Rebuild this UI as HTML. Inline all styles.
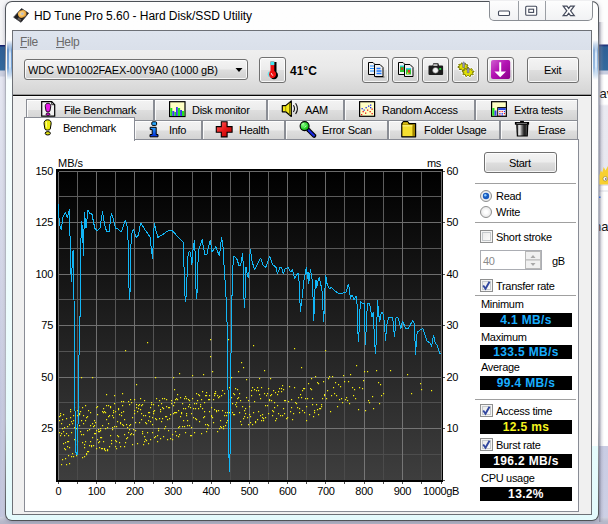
<!DOCTYPE html>
<html><head><meta charset="utf-8"><title>HD Tune Pro 5.60 - Hard Disk/SSD Utility</title>
<style>
html,body{margin:0;padding:0}
body{width:608px;height:524px;overflow:hidden;position:relative;background:#fff;font-family:"Liberation Sans",sans-serif;font-size:11px;color:#000}
div,span{position:absolute;box-sizing:border-box;white-space:nowrap}
.t{line-height:12px;height:12px;letter-spacing:-.3px}
/* desktop behind */
#bgL{left:0;top:0;width:8px;height:524px;background:linear-gradient(#f6f6f8 0,#f4f4f6 45px,#14206e 45px,#14206e 46px,#2d5f96 47px,#336a9e 70px,#cdd2e2 71px,#cdd2e2 76px,#e6e8f3 77px,#e2e4f0 300px,#d6d9e9 524px)}
#bgLs{left:0;top:77px;width:6px;height:447px;background:linear-gradient(to right,rgba(190,194,220,.9),rgba(215,218,235,.2))}
#bgLs2{left:0;top:77px;width:6px;height:447px;background:linear-gradient(rgba(232,234,244,.95),rgba(232,234,244,.6) 120px,rgba(232,234,244,0) 330px)}
#bgR{left:596px;top:0;width:12px;height:524px;background:linear-gradient(#fdfdfd 0,#fdfdfd 44px,#1c2a74 45px,#2d5f96 47px,#336a9e 70px,#c8cde0 71px,#c8cde0 74px,#ffffff 75px,#ffffff 104px,#e9e9f1 106px,#e7e7ef 186px,#fff 186px,#fff 190px,#dcdce4 191px,#fff 192px,#ffffff 446px,#c9cce3 446px,#cdd0e5 524px)}
#bgRs{left:599px;top:22px;width:5px;height:500px;background:linear-gradient(to right,rgba(110,110,130,.55),rgba(150,150,170,.2) 50%,rgba(160,160,180,0))}
#bgB{left:0;top:517px;width:608px;height:7px;background:linear-gradient(#d0d3e2,#b8bacb 60%,#b4b6c8)}
/* window */
#win{left:5px;top:1px;width:594px;height:520px;border:1px solid transparent;border-radius:7px;background:linear-gradient(#fefefe 0,#fdfdfd 444px,#e5fbfc 444px,#e4fafc 100%) padding-box,linear-gradient(#4c5056 0,#5c6066 30px,#a8acb6 70px,#b4b8c2 110px,#b0b4be 420px,#6a6e74 490px,#4e5256 520px) border-box;box-shadow:0 1px 4px 0 rgba(70,70,100,.35)}
#frL{left:6px;top:78px;width:6px;height:380px;background:linear-gradient(#f8fefe,#eefcfd 200px,#e5fbfc 380px)}
#frR{left:592px;top:446px;width:6px;height:72px;background:#e5fbfc}
#frB{left:7px;top:515px;width:590px;height:5px;border-radius:0 0 5px 5px;background:linear-gradient(#e6fcfd,#e3fafc)}
#glowL{left:7px;top:40px;width:5px;height:40px;background:linear-gradient(rgba(70,125,190,0),rgba(70,125,190,.8) 25%,rgba(90,145,205,.8) 70%,rgba(120,170,220,0))}
#glowR{left:593px;top:40px;width:5px;height:40px;background:linear-gradient(rgba(70,125,190,0),rgba(90,140,200,.7) 25%,rgba(110,160,215,.7) 70%,rgba(120,170,220,0))}
.glc{width:1.5px;top:44px;height:32px;background:linear-gradient(rgba(255,255,255,0),rgba(235,245,255,.8) 30%,rgba(235,245,255,.8) 70%,rgba(255,255,255,0))}
.bt{font-size:13px;line-height:14px;height:14px;color:#111}
#title{left:34px;top:9px;letter-spacing:-.05px;font-size:12px;line-height:15px;height:15px;color:#000;transform-origin:0 0}
#caps{left:489px;top:1px;width:104px;height:20px;border:1px solid #8a8e94;border-top:none;border-radius:0 0 5px 5px;background:linear-gradient(#fdfdfd,#f1f2f4)}
#caps i{position:absolute;top:0;width:1px;height:19px;background:#9a9ea4}
/* client */
#client{left:12px;top:30px;width:580px;height:485px;border:1px solid #6d7076;background:#f0f0f0}
#menubar{left:13px;top:31px;width:578px;height:19px;background:linear-gradient(#dee4ee,#dae0ea)}
.mi{top:35px;letter-spacing:-.35px;font-size:12px;line-height:14px;height:14px;color:#6a6a6a}
.mi u{text-decoration:underline}
#toolbar{left:13px;top:50px;width:578px;height:45px;background:linear-gradient(#efefef,#e9e9e9 40%,#d4d4d4)}
#tbline{left:13px;top:94px;width:578px;height:3px;background:linear-gradient(#9a9a9a 0,#9a9a9a 33%,#060606 33%,#060606 67%,#f8f8f8 67%)}
.btn{border:1px solid #707070;border-radius:3px;background:linear-gradient(#f4f4f4 0,#ececec 48%,#dedede 52%,#d0d0d0 100%);box-shadow:inset 0 0 0 1px rgba(255,255,255,.8)}
#combo{left:24px;top:59px;width:224px;height:21px}
/* tabs */
.tab{border:1px solid #8a8d94;border-bottom:none;background:linear-gradient(#f3f3f3 0,#ececec 48%,#dedede 52%,#d2d2d2 100%);height:20px;box-shadow:inset 1px 1px 0 rgba(255,255,255,.85)}
.tab.r1{top:99px;height:21px}
.tab.r2{top:120px;height:20px}
#seltab{left:24px;top:117px;width:111px;height:24px;border:1px solid #898c95;border-bottom:none;background:#fff}
#page{left:24px;top:139px;width:555px;height:373px;border:1px solid #898c95;background:#fff}
.sep{left:475px;width:101px;height:1px;background:#a0a0a0}
.vb{left:480px;width:92px;height:14px;background:#000;text-align:center;font-weight:bold;font-size:12px;line-height:14px;color:#18aeff;letter-spacing:.35px}
.cb{left:480px;width:13px;height:13px;border:1px solid #8e8f8f;background:linear-gradient(135deg,#e6e6e6,#fff);box-shadow:inset 0 0 0 1px #f4f4f4, inset 0 0 0 2px #c5c9cc}
.rb{left:480px;width:12px;height:12px;border:1px solid #8e8f8f;border-radius:6px;background:radial-gradient(#fff 20%,#dcdcdc 100%)}
svg{position:absolute;left:0;top:0}
.ax{font-family:"Liberation Sans",sans-serif;font-size:11px;fill:#000;letter-spacing:-.3px}
</style></head><body>
<div id="bgL"></div><div id="bgLs"></div><div id="bgLs2"></div><div id="bgR"></div><div id="bgB"></div>
<span class="bt" style="left:599.500px;top:87px">av</span><span class="bt" style="left:594px;top:220px">ha</span>
<div id="bgRs"></div>
<div id="win"></div><div id="frL"></div><div id="glowL"></div><div id="glowR"></div><div class="glc" style="left:9px"></div><div class="glc" style="left:595px"></div>
<div id="title">HD Tune Pro 5.60 - Hard Disk/SSD Utility</div>
<div id="caps"><i style="left:28px"></i><i style="left:55px"></i></div>
<div id="client"></div>
<div id="menubar"></div>
<span class="mi" style="left:20px"><u>F</u>ile</span><span class="mi" style="left:56px"><u>H</u>elp</span>
<div id="toolbar"></div><div id="tbline"></div>
<div id="combo" class="btn"></div>
<span class="t" style="left:28px;top:64px;letter-spacing:-.15px" id="cbtxt">WDC WD1002FAEX-00Y9A0 (1000 gB)</span>
<div class="btn" style="left:259px;top:57px;width:27px;height:26px"></div>
<span id="temp" style="left:290px;top:64px;font-size:12px;font-weight:bold;line-height:14px;height:14px">41°C</span>
<div class="btn" style="left:362px;top:57px;width:27px;height:26px"></div>
<div class="btn" style="left:392px;top:57px;width:27px;height:26px"></div>
<div class="btn" style="left:422px;top:57px;width:27px;height:26px"></div>
<div class="btn" style="left:452px;top:57px;width:27px;height:26px"></div>
<div class="btn" style="left:487px;top:57px;width:27px;height:26px"></div>
<div class="btn" style="left:527px;top:57px;width:52px;height:26px"></div>
<span class="t" style="left:544px;top:64px">Exit</span>

<!-- tabs row 1 -->
<div class="tab r1" style="left:26px;width:128px"></div>
<div class="tab r1" style="left:154px;width:113px"></div>
<div class="tab r1" style="left:267px;width:77px"></div>
<div class="tab r1" style="left:344px;width:131px"></div>
<div class="tab r1" style="left:475px;width:103px"></div>
<span class="t" style="left:64px;top:104px">File Benchmark</span>
<span class="t" style="left:192px;top:104px">Disk monitor</span>
<span class="t" style="left:305px;top:104px">AAM</span>
<span class="t" style="left:382px;top:104px">Random Access</span>
<span class="t" style="left:514px;top:104px">Extra tests</span>
<!-- tabs row 2 -->
<div class="tab r2" style="left:134px;width:68px"></div>
<div class="tab r2" style="left:202px;width:83px"></div>
<div class="tab r2" style="left:285px;width:103px"></div>
<div class="tab r2" style="left:388px;width:112px"></div>
<div class="tab r2" style="left:500px;width:78px"></div>
<div id="page"></div>
<div id="seltab"></div>
<span class="t" style="left:63px;top:122px">Benchmark</span>
<span class="t" style="left:169px;top:124px">Info</span>
<span class="t" style="left:239px;top:124px">Health</span>
<span class="t" style="left:322px;top:124px">Error Scan</span>
<span class="t" style="left:424px;top:124px">Folder Usage</span>
<span class="t" style="left:538px;top:124px">Erase</span>

<!-- right panel -->
<div class="btn" style="left:484px;top:152px;width:73px;height:21px"></div>
<span class="t" style="left:509px;top:157px">Start</span>
<div class="sep" style="top:183px"></div>
<div class="rb" style="top:190px"></div><span class="t" style="left:496px;top:190px">Read</span>
<div class="rb" style="top:206px"></div><span class="t" style="left:496px;top:206px">Write</span>
<div class="sep" style="top:222px"></div>
<div class="cb" style="top:230px"></div><span class="t" style="left:496px;top:231px">Short stroke</span>
<div style="left:480px;top:250px;width:62px;height:20px;border:1px solid #abadb3;background:#fff"></div>
<span class="t" style="left:483px;top:255px;color:#8a8a8a">40</span>
<span class="t" style="left:552px;top:255px">gB</span>
<div class="cb" style="top:279px"></div><span class="t" style="left:496px;top:280px">Transfer rate</span>
<div class="sep" style="top:295px"></div>
<span class="t" style="left:481px;top:298px">Minimum</span>
<div class="vb" style="top:313px">4.1 MB/s</div>
<span class="t" style="left:481px;top:331px">Maximum</span>
<div class="vb" style="top:345px">133.5 MB/s</div>
<span class="t" style="left:481px;top:361px">Average</span>
<div class="vb" style="top:376px">99.4 MB/s</div>
<div class="sep" style="top:399px"></div>
<div class="cb" style="top:404px"></div><span class="t" style="left:496px;top:405px">Access time</span>
<div class="vb" style="top:420px;color:#f4f41e">12.5 ms</div>
<div class="cb" style="top:438px"></div><span class="t" style="left:496px;top:439px">Burst rate</span>
<div class="vb" style="top:454px;color:#fff">196.2 MB/s</div>
<span class="t" style="left:481px;top:472px">CPU usage</span>
<div class="vb" style="top:487px;color:#fff">13.2%</div>

<!-- chart -->
<svg width="608" height="524" viewBox="0 0 608 524" id="chart">
<defs><linearGradient id="cg" x1="0" y1="0" x2="0" y2="1"><stop offset="0" stop-color="#000"/><stop offset="1" stop-color="#3e3e3e"/></linearGradient><linearGradient id="mg" gradientUnits="userSpaceOnUse" x1="0" y1="171" x2="0" y2="480"><stop offset="0" stop-color="#5e5e5e"/><stop offset="1" stop-color="#4a4a4a"/></linearGradient><linearGradient id="Mg" gradientUnits="userSpaceOnUse" x1="0" y1="171" x2="0" y2="480"><stop offset="0" stop-color="#6a6a6a"/><stop offset="1" stop-color="#767676"/></linearGradient></defs>
<rect x="56" y="169" width="387" height="313" fill="#000"/>
<rect x="58" y="171" width="384" height="309" fill="url(#cg)"/>
<g stroke-width="1" fill="none" id="grid" shape-rendering="crispEdges"><path stroke="url(#mg)" d="M77.5 171.5V480.5M115.5 171.5V480.5M153.5 171.5V480.5M192.5 171.5V480.5M230.5 171.5V480.5M268.5 171.5V480.5M306.5 171.5V480.5M344.5 171.5V480.5M383.5 171.5V480.5M421.5 171.5V480.5"/><path stroke="#5c5c5c" d="M58.5 196.5H441.5"/><path stroke="#595959" d="M58.5 248.5H441.5"/><path stroke="#565656" d="M58.5 299.5H441.5"/><path stroke="#535353" d="M58.5 351.5H441.5"/><path stroke="#505050" d="M58.5 402.5H441.5"/><path stroke="#4d4d4d" d="M58.5 454.5H441.5"/><path stroke="url(#Mg)" d="M58.5 171.5V480.5M96.5 171.5V480.5M134.5 171.5V480.5M172.5 171.5V480.5M211.5 171.5V480.5M249.5 171.5V480.5M287.5 171.5V480.5M325.5 171.5V480.5M364.5 171.5V480.5M402.5 171.5V480.5M441.5 171.5V480.5M58.5 171.5H441.5M58.5 222.5H441.5M58.5 274.5H441.5M58.5 325.5H441.5M58.5 377.5H441.5M58.5 428.5H441.5M58.5 480.5H441.5"/></g>
<path d="M59 420h1.15v1.15h-1.15zM59 416h1.15v1.15h-1.15zM59 432h1.15v1.15h-1.15zM60 413h1.15v1.15h-1.15zM60 415h1.15v1.15h-1.15zM60 435h1.15v1.15h-1.15zM61 423h1.15v1.15h-1.15zM61 464h1.15v1.15h-1.15zM61 433h1.15v1.15h-1.15zM62 459h1.15v1.15h-1.15zM62 419h1.15v1.15h-1.15zM62 428h1.15v1.15h-1.15zM63 443h1.15v1.15h-1.15zM63 431h1.15v1.15h-1.15zM63 414h1.15v1.15h-1.15zM64 448h1.15v1.15h-1.15zM64 427h1.15v1.15h-1.15zM64 435h1.15v1.15h-1.15zM65 449h1.15v1.15h-1.15zM65 442h1.15v1.15h-1.15zM65 458h1.15v1.15h-1.15zM66 464h1.15v1.15h-1.15zM66 433h1.15v1.15h-1.15zM66 418h1.15v1.15h-1.15zM67 446h1.15v1.15h-1.15zM67 441h1.15v1.15h-1.15zM67 426h1.15v1.15h-1.15zM68 441h1.15v1.15h-1.15zM68 455h1.15v1.15h-1.15zM68 435h1.15v1.15h-1.15zM69 447h1.15v1.15h-1.15zM69 463h1.15v1.15h-1.15zM69 424h1.15v1.15h-1.15zM70 409h1.15v1.15h-1.15zM70 417h1.15v1.15h-1.15zM70 411h1.15v1.15h-1.15zM71 421h1.15v1.15h-1.15zM71 456h1.15v1.15h-1.15zM71 432h1.15v1.15h-1.15zM72 453h1.15v1.15h-1.15zM72 423h1.15v1.15h-1.15zM73 456h1.15v1.15h-1.15zM73 415h1.15v1.15h-1.15zM73 420h1.15v1.15h-1.15zM74 439h1.15v1.15h-1.15zM74 407h1.15v1.15h-1.15zM74 427h1.15v1.15h-1.15zM75 444h1.15v1.15h-1.15zM75 440h1.15v1.15h-1.15zM76 455h1.15v1.15h-1.15zM76 454h1.15v1.15h-1.15zM76 428h1.15v1.15h-1.15zM77 441h1.15v1.15h-1.15zM77 410h1.15v1.15h-1.15zM77 415h1.15v1.15h-1.15zM78 406h1.15v1.15h-1.15zM78 411h1.15v1.15h-1.15zM78 407h1.15v1.15h-1.15zM79 414h1.15v1.15h-1.15zM79 425h1.15v1.15h-1.15zM79 413h1.15v1.15h-1.15zM80 431h1.15v1.15h-1.15zM80 411h1.15v1.15h-1.15zM81 420h1.15v1.15h-1.15zM81 377h1.15v1.15h-1.15zM81 434h1.15v1.15h-1.15zM82 407h1.15v1.15h-1.15zM82 457h1.15v1.15h-1.15zM82 442h1.15v1.15h-1.15zM83 415h1.15v1.15h-1.15zM83 434h1.15v1.15h-1.15zM83 423h1.15v1.15h-1.15zM84 456h1.15v1.15h-1.15zM84 447h1.15v1.15h-1.15zM84 444h1.15v1.15h-1.15zM85 405h1.15v1.15h-1.15zM85 420h1.15v1.15h-1.15zM85 441h1.15v1.15h-1.15zM86 453h1.15v1.15h-1.15zM86 454h1.15v1.15h-1.15zM86 417h1.15v1.15h-1.15zM87 416h1.15v1.15h-1.15zM87 451h1.15v1.15h-1.15zM87 430h1.15v1.15h-1.15zM88 410h1.15v1.15h-1.15zM88 451h1.15v1.15h-1.15zM89 429h1.15v1.15h-1.15zM89 445h1.15v1.15h-1.15zM89 445h1.15v1.15h-1.15zM90 425h1.15v1.15h-1.15zM90 441h1.15v1.15h-1.15zM90 412h1.15v1.15h-1.15zM91 445h1.15v1.15h-1.15zM91 446h1.15v1.15h-1.15zM92 423h1.15v1.15h-1.15zM92 377h1.15v1.15h-1.15zM92 437h1.15v1.15h-1.15zM93 426h1.15v1.15h-1.15zM93 445h1.15v1.15h-1.15zM94 420h1.15v1.15h-1.15zM94 433h1.15v1.15h-1.15zM94 425h1.15v1.15h-1.15zM95 422h1.15v1.15h-1.15zM95 433h1.15v1.15h-1.15zM96 448h1.15v1.15h-1.15zM96 430h1.15v1.15h-1.15zM96 407h1.15v1.15h-1.15zM97 406h1.15v1.15h-1.15zM97 414h1.15v1.15h-1.15zM97 439h1.15v1.15h-1.15zM98 429h1.15v1.15h-1.15zM98 442h1.15v1.15h-1.15zM98 431h1.15v1.15h-1.15zM99 441h1.15v1.15h-1.15zM99 431h1.15v1.15h-1.15zM99 447h1.15v1.15h-1.15zM100 428h1.15v1.15h-1.15zM100 437h1.15v1.15h-1.15zM100 430h1.15v1.15h-1.15zM101 437h1.15v1.15h-1.15zM101 448h1.15v1.15h-1.15zM102 448h1.15v1.15h-1.15zM102 411h1.15v1.15h-1.15zM102 425h1.15v1.15h-1.15zM103 408h1.15v1.15h-1.15zM103 441h1.15v1.15h-1.15zM103 412h1.15v1.15h-1.15zM104 411h1.15v1.15h-1.15zM104 449h1.15v1.15h-1.15zM104 448h1.15v1.15h-1.15zM105 450h1.15v1.15h-1.15zM105 412h1.15v1.15h-1.15zM105 428h1.15v1.15h-1.15zM106 419h1.15v1.15h-1.15zM106 405h1.15v1.15h-1.15zM106 394h1.15v1.15h-1.15zM107 427h1.15v1.15h-1.15zM107 450h1.15v1.15h-1.15zM107 449h1.15v1.15h-1.15zM108 405h1.15v1.15h-1.15zM108 416h1.15v1.15h-1.15zM108 423h1.15v1.15h-1.15zM109 415h1.15v1.15h-1.15zM109 446h1.15v1.15h-1.15zM110 407h1.15v1.15h-1.15zM110 435h1.15v1.15h-1.15zM110 406h1.15v1.15h-1.15zM111 440h1.15v1.15h-1.15zM111 443h1.15v1.15h-1.15zM111 443h1.15v1.15h-1.15zM112 429h1.15v1.15h-1.15zM112 415h1.15v1.15h-1.15zM112 427h1.15v1.15h-1.15zM113 410h1.15v1.15h-1.15zM113 412h1.15v1.15h-1.15zM113 417h1.15v1.15h-1.15zM114 426h1.15v1.15h-1.15zM114 395h1.15v1.15h-1.15zM114 403h1.15v1.15h-1.15zM115 411h1.15v1.15h-1.15zM115 446h1.15v1.15h-1.15zM115 440h1.15v1.15h-1.15zM116 441h1.15v1.15h-1.15zM116 426h1.15v1.15h-1.15zM116 448h1.15v1.15h-1.15zM117 435h1.15v1.15h-1.15zM117 421h1.15v1.15h-1.15zM118 408h1.15v1.15h-1.15zM118 436h1.15v1.15h-1.15zM118 409h1.15v1.15h-1.15zM119 442h1.15v1.15h-1.15zM119 414h1.15v1.15h-1.15zM120 423h1.15v1.15h-1.15zM120 422h1.15v1.15h-1.15zM120 446h1.15v1.15h-1.15zM121 412h1.15v1.15h-1.15zM121 415h1.15v1.15h-1.15zM121 401h1.15v1.15h-1.15zM122 424h1.15v1.15h-1.15zM122 393h1.15v1.15h-1.15zM122 405h1.15v1.15h-1.15zM123 401h1.15v1.15h-1.15zM123 411h1.15v1.15h-1.15zM123 425h1.15v1.15h-1.15zM124 434h1.15v1.15h-1.15zM124 419h1.15v1.15h-1.15zM124 446h1.15v1.15h-1.15zM125 350h1.15v1.15h-1.15zM125 442h1.15v1.15h-1.15zM126 438h1.15v1.15h-1.15zM126 424h1.15v1.15h-1.15zM127 437h1.15v1.15h-1.15zM127 427h1.15v1.15h-1.15zM128 432h1.15v1.15h-1.15zM128 401h1.15v1.15h-1.15zM129 404h1.15v1.15h-1.15zM129 425h1.15v1.15h-1.15zM129 429h1.15v1.15h-1.15zM130 399h1.15v1.15h-1.15zM130 434h1.15v1.15h-1.15zM130 424h1.15v1.15h-1.15zM131 433h1.15v1.15h-1.15zM131 402h1.15v1.15h-1.15zM131 433h1.15v1.15h-1.15zM132 444h1.15v1.15h-1.15zM132 417h1.15v1.15h-1.15zM133 434h1.15v1.15h-1.15zM133 429h1.15v1.15h-1.15zM134 410h1.15v1.15h-1.15zM134 413h1.15v1.15h-1.15zM134 399h1.15v1.15h-1.15zM135 430h1.15v1.15h-1.15zM135 430h1.15v1.15h-1.15zM135 422h1.15v1.15h-1.15zM136 404h1.15v1.15h-1.15zM136 407h1.15v1.15h-1.15zM136 384h1.15v1.15h-1.15zM137 443h1.15v1.15h-1.15zM137 411h1.15v1.15h-1.15zM138 408h1.15v1.15h-1.15zM138 405h1.15v1.15h-1.15zM139 404h1.15v1.15h-1.15zM139 422h1.15v1.15h-1.15zM140 409h1.15v1.15h-1.15zM140 398h1.15v1.15h-1.15zM141 419h1.15v1.15h-1.15zM141 405h1.15v1.15h-1.15zM141 413h1.15v1.15h-1.15zM142 433h1.15v1.15h-1.15zM142 404h1.15v1.15h-1.15zM142 431h1.15v1.15h-1.15zM143 415h1.15v1.15h-1.15zM143 444h1.15v1.15h-1.15zM143 415h1.15v1.15h-1.15zM144 400h1.15v1.15h-1.15zM144 436h1.15v1.15h-1.15zM144 441h1.15v1.15h-1.15zM145 422h1.15v1.15h-1.15zM145 415h1.15v1.15h-1.15zM145 439h1.15v1.15h-1.15zM146 440h1.15v1.15h-1.15zM146 423h1.15v1.15h-1.15zM147 432h1.15v1.15h-1.15zM147 432h1.15v1.15h-1.15zM147 342h1.15v1.15h-1.15zM148 420h1.15v1.15h-1.15zM148 412h1.15v1.15h-1.15zM148 443h1.15v1.15h-1.15zM149 412h1.15v1.15h-1.15zM149 416h1.15v1.15h-1.15zM150 407h1.15v1.15h-1.15zM150 421h1.15v1.15h-1.15zM150 439h1.15v1.15h-1.15zM151 404h1.15v1.15h-1.15zM151 402h1.15v1.15h-1.15zM151 402h1.15v1.15h-1.15zM152 424h1.15v1.15h-1.15zM152 432h1.15v1.15h-1.15zM152 417h1.15v1.15h-1.15zM153 413h1.15v1.15h-1.15zM153 411h1.15v1.15h-1.15zM153 404h1.15v1.15h-1.15zM154 437h1.15v1.15h-1.15zM154 410h1.15v1.15h-1.15zM155 418h1.15v1.15h-1.15zM155 436h1.15v1.15h-1.15zM155 377h1.15v1.15h-1.15zM156 419h1.15v1.15h-1.15zM156 398h1.15v1.15h-1.15zM157 435h1.15v1.15h-1.15zM157 441h1.15v1.15h-1.15zM158 405h1.15v1.15h-1.15zM158 428h1.15v1.15h-1.15zM158 430h1.15v1.15h-1.15zM159 418h1.15v1.15h-1.15zM159 400h1.15v1.15h-1.15zM160 438h1.15v1.15h-1.15zM160 411h1.15v1.15h-1.15zM160 409h1.15v1.15h-1.15zM161 403h1.15v1.15h-1.15zM161 421h1.15v1.15h-1.15zM162 407h1.15v1.15h-1.15zM162 398h1.15v1.15h-1.15zM162 418h1.15v1.15h-1.15zM163 436h1.15v1.15h-1.15zM163 408h1.15v1.15h-1.15zM164 428h1.15v1.15h-1.15zM164 398h1.15v1.15h-1.15zM165 416h1.15v1.15h-1.15zM165 426h1.15v1.15h-1.15zM166 399h1.15v1.15h-1.15zM166 416h1.15v1.15h-1.15zM166 406h1.15v1.15h-1.15zM167 419h1.15v1.15h-1.15zM167 439h1.15v1.15h-1.15zM168 407h1.15v1.15h-1.15zM168 430h1.15v1.15h-1.15zM169 418h1.15v1.15h-1.15zM169 407h1.15v1.15h-1.15zM170 438h1.15v1.15h-1.15zM170 414h1.15v1.15h-1.15zM171 403h1.15v1.15h-1.15zM171 400h1.15v1.15h-1.15zM172 434h1.15v1.15h-1.15zM172 439h1.15v1.15h-1.15zM173 405h1.15v1.15h-1.15zM173 377h1.15v1.15h-1.15zM173 413h1.15v1.15h-1.15zM174 389h1.15v1.15h-1.15zM174 412h1.15v1.15h-1.15zM174 402h1.15v1.15h-1.15zM175 412h1.15v1.15h-1.15zM175 431h1.15v1.15h-1.15zM175 399h1.15v1.15h-1.15zM176 435h1.15v1.15h-1.15zM176 412h1.15v1.15h-1.15zM176 398h1.15v1.15h-1.15zM177 394h1.15v1.15h-1.15zM177 399h1.15v1.15h-1.15zM178 427h1.15v1.15h-1.15zM178 410h1.15v1.15h-1.15zM178 436h1.15v1.15h-1.15zM179 426h1.15v1.15h-1.15zM179 373h1.15v1.15h-1.15zM179 434h1.15v1.15h-1.15zM180 397h1.15v1.15h-1.15zM180 416h1.15v1.15h-1.15zM181 412h1.15v1.15h-1.15zM181 413h1.15v1.15h-1.15zM182 403h1.15v1.15h-1.15zM182 426h1.15v1.15h-1.15zM183 420h1.15v1.15h-1.15zM183 408h1.15v1.15h-1.15zM184 398h1.15v1.15h-1.15zM184 426h1.15v1.15h-1.15zM185 396h1.15v1.15h-1.15zM185 408h1.15v1.15h-1.15zM185 432h1.15v1.15h-1.15zM186 398h1.15v1.15h-1.15zM186 415h1.15v1.15h-1.15zM186 413h1.15v1.15h-1.15zM187 420h1.15v1.15h-1.15zM187 425h1.15v1.15h-1.15zM188 399h1.15v1.15h-1.15zM188 406h1.15v1.15h-1.15zM189 425h1.15v1.15h-1.15zM189 404h1.15v1.15h-1.15zM189 400h1.15v1.15h-1.15zM190 407h1.15v1.15h-1.15zM190 435h1.15v1.15h-1.15zM191 427h1.15v1.15h-1.15zM191 435h1.15v1.15h-1.15zM191 413h1.15v1.15h-1.15zM192 375h1.15v1.15h-1.15zM192 398h1.15v1.15h-1.15zM193 417h1.15v1.15h-1.15zM193 408h1.15v1.15h-1.15zM194 403h1.15v1.15h-1.15zM194 432h1.15v1.15h-1.15zM195 418h1.15v1.15h-1.15zM195 408h1.15v1.15h-1.15zM196 403h1.15v1.15h-1.15zM196 419h1.15v1.15h-1.15zM196 393h1.15v1.15h-1.15zM197 400h1.15v1.15h-1.15zM197 400h1.15v1.15h-1.15zM198 394h1.15v1.15h-1.15zM198 408h1.15v1.15h-1.15zM199 395h1.15v1.15h-1.15zM199 421h1.15v1.15h-1.15zM200 404h1.15v1.15h-1.15zM200 404h1.15v1.15h-1.15zM200 406h1.15v1.15h-1.15zM201 433h1.15v1.15h-1.15zM201 399h1.15v1.15h-1.15zM202 391h1.15v1.15h-1.15zM202 408h1.15v1.15h-1.15zM202 408h1.15v1.15h-1.15zM203 374h1.15v1.15h-1.15zM203 417h1.15v1.15h-1.15zM204 416h1.15v1.15h-1.15zM204 411h1.15v1.15h-1.15zM204 402h1.15v1.15h-1.15zM205 395h1.15v1.15h-1.15zM205 424h1.15v1.15h-1.15zM206 395h1.15v1.15h-1.15zM206 431h1.15v1.15h-1.15zM206 392h1.15v1.15h-1.15zM207 428h1.15v1.15h-1.15zM207 424h1.15v1.15h-1.15zM208 399h1.15v1.15h-1.15zM208 425h1.15v1.15h-1.15zM209 399h1.15v1.15h-1.15zM209 411h1.15v1.15h-1.15zM209 395h1.15v1.15h-1.15zM210 356h1.15v1.15h-1.15zM210 339h1.15v1.15h-1.15zM211 415h1.15v1.15h-1.15zM211 416h1.15v1.15h-1.15zM211 407h1.15v1.15h-1.15zM212 417h1.15v1.15h-1.15zM212 371h1.15v1.15h-1.15zM213 399h1.15v1.15h-1.15zM213 422h1.15v1.15h-1.15zM214 409h1.15v1.15h-1.15zM214 395h1.15v1.15h-1.15zM214 393h1.15v1.15h-1.15zM215 391h1.15v1.15h-1.15zM215 393h1.15v1.15h-1.15zM216 411h1.15v1.15h-1.15zM216 410h1.15v1.15h-1.15zM217 395h1.15v1.15h-1.15zM217 431h1.15v1.15h-1.15zM218 397h1.15v1.15h-1.15zM218 410h1.15v1.15h-1.15zM219 396h1.15v1.15h-1.15zM219 428h1.15v1.15h-1.15zM220 420h1.15v1.15h-1.15zM220 426h1.15v1.15h-1.15zM221 395h1.15v1.15h-1.15zM221 427h1.15v1.15h-1.15zM222 410h1.15v1.15h-1.15zM222 390h1.15v1.15h-1.15zM223 428h1.15v1.15h-1.15zM223 426h1.15v1.15h-1.15zM224 393h1.15v1.15h-1.15zM224 415h1.15v1.15h-1.15zM225 412h1.15v1.15h-1.15zM225 425h1.15v1.15h-1.15zM226 415h1.15v1.15h-1.15zM226 422h1.15v1.15h-1.15zM227 412h1.15v1.15h-1.15zM227 420h1.15v1.15h-1.15zM228 339h1.15v1.15h-1.15zM228 399h1.15v1.15h-1.15zM229 412h1.15v1.15h-1.15zM229 387h1.15v1.15h-1.15zM230 414h1.15v1.15h-1.15zM230 409h1.15v1.15h-1.15zM231 397h1.15v1.15h-1.15zM231 377h1.15v1.15h-1.15zM232 403h1.15v1.15h-1.15zM232 412h1.15v1.15h-1.15zM233 414h1.15v1.15h-1.15zM233 393h1.15v1.15h-1.15zM234 394h1.15v1.15h-1.15zM234 414h1.15v1.15h-1.15zM235 404h1.15v1.15h-1.15zM235 388h1.15v1.15h-1.15zM236 402h1.15v1.15h-1.15zM236 406h1.15v1.15h-1.15zM237 398h1.15v1.15h-1.15zM237 389h1.15v1.15h-1.15zM238 397h1.15v1.15h-1.15zM238 371h1.15v1.15h-1.15zM239 393h1.15v1.15h-1.15zM239 412h1.15v1.15h-1.15zM240 421h1.15v1.15h-1.15zM240 400h1.15v1.15h-1.15zM241 424h1.15v1.15h-1.15zM241 362h1.15v1.15h-1.15zM242 406h1.15v1.15h-1.15zM242 406h1.15v1.15h-1.15zM243 367h1.15v1.15h-1.15zM243 418h1.15v1.15h-1.15zM244 416h1.15v1.15h-1.15zM244 410h1.15v1.15h-1.15zM245 408h1.15v1.15h-1.15zM245 413h1.15v1.15h-1.15zM246 379h1.15v1.15h-1.15zM246 397h1.15v1.15h-1.15zM247 417h1.15v1.15h-1.15zM248 400h1.15v1.15h-1.15zM248 424h1.15v1.15h-1.15zM249 414h1.15v1.15h-1.15zM249 406h1.15v1.15h-1.15zM250 422h1.15v1.15h-1.15zM250 416h1.15v1.15h-1.15zM251 395h1.15v1.15h-1.15zM251 390h1.15v1.15h-1.15zM252 387h1.15v1.15h-1.15zM252 424h1.15v1.15h-1.15zM253 345h1.15v1.15h-1.15zM253 412h1.15v1.15h-1.15zM254 389h1.15v1.15h-1.15zM254 401h1.15v1.15h-1.15zM255 422h1.15v1.15h-1.15zM255 421h1.15v1.15h-1.15zM256 390h1.15v1.15h-1.15zM257 387h1.15v1.15h-1.15zM257 419h1.15v1.15h-1.15zM258 411h1.15v1.15h-1.15zM258 390h1.15v1.15h-1.15zM259 394h1.15v1.15h-1.15zM259 378h1.15v1.15h-1.15zM260 415h1.15v1.15h-1.15zM260 398h1.15v1.15h-1.15zM261 420h1.15v1.15h-1.15zM261 387h1.15v1.15h-1.15zM262 417h1.15v1.15h-1.15zM262 414h1.15v1.15h-1.15zM263 420h1.15v1.15h-1.15zM263 418h1.15v1.15h-1.15zM264 393h1.15v1.15h-1.15zM264 370h1.15v1.15h-1.15zM265 417h1.15v1.15h-1.15zM265 405h1.15v1.15h-1.15zM266 395h1.15v1.15h-1.15zM267 393h1.15v1.15h-1.15zM267 405h1.15v1.15h-1.15zM268 388h1.15v1.15h-1.15zM268 413h1.15v1.15h-1.15zM269 399h1.15v1.15h-1.15zM269 400h1.15v1.15h-1.15zM270 378h1.15v1.15h-1.15zM270 395h1.15v1.15h-1.15zM271 400h1.15v1.15h-1.15zM271 394h1.15v1.15h-1.15zM272 415h1.15v1.15h-1.15zM272 410h1.15v1.15h-1.15zM273 390h1.15v1.15h-1.15zM273 411h1.15v1.15h-1.15zM274 402h1.15v1.15h-1.15zM274 407h1.15v1.15h-1.15zM275 420h1.15v1.15h-1.15zM275 392h1.15v1.15h-1.15zM276 418h1.15v1.15h-1.15zM277 394h1.15v1.15h-1.15zM277 405h1.15v1.15h-1.15zM278 391h1.15v1.15h-1.15zM278 413h1.15v1.15h-1.15zM279 388h1.15v1.15h-1.15zM280 415h1.15v1.15h-1.15zM281 391h1.15v1.15h-1.15zM281 388h1.15v1.15h-1.15zM282 385h1.15v1.15h-1.15zM282 415h1.15v1.15h-1.15zM283 408h1.15v1.15h-1.15zM283 389h1.15v1.15h-1.15zM284 413h1.15v1.15h-1.15zM284 400h1.15v1.15h-1.15zM285 400h1.15v1.15h-1.15zM286 418h1.15v1.15h-1.15zM287 417h1.15v1.15h-1.15zM288 401h1.15v1.15h-1.15zM289 386h1.15v1.15h-1.15zM290 411h1.15v1.15h-1.15zM291 399h1.15v1.15h-1.15zM291 407h1.15v1.15h-1.15zM292 419h1.15v1.15h-1.15zM293 413h1.15v1.15h-1.15zM294 348h1.15v1.15h-1.15zM294 387h1.15v1.15h-1.15zM295 402h1.15v1.15h-1.15zM296 403h1.15v1.15h-1.15zM297 407h1.15v1.15h-1.15zM298 397h1.15v1.15h-1.15zM299 408h1.15v1.15h-1.15zM299 412h1.15v1.15h-1.15zM300 394h1.15v1.15h-1.15zM301 367h1.15v1.15h-1.15zM301 397h1.15v1.15h-1.15zM302 390h1.15v1.15h-1.15zM302 410h1.15v1.15h-1.15zM303 388h1.15v1.15h-1.15zM304 388h1.15v1.15h-1.15zM304 412h1.15v1.15h-1.15zM305 398h1.15v1.15h-1.15zM306 420h1.15v1.15h-1.15zM306 406h1.15v1.15h-1.15zM307 398h1.15v1.15h-1.15zM308 383h1.15v1.15h-1.15zM309 414h1.15v1.15h-1.15zM310 388h1.15v1.15h-1.15zM311 378h1.15v1.15h-1.15zM311 389h1.15v1.15h-1.15zM312 398h1.15v1.15h-1.15zM312 404h1.15v1.15h-1.15zM313 416h1.15v1.15h-1.15zM314 412h1.15v1.15h-1.15zM314 410h1.15v1.15h-1.15zM315 376h1.15v1.15h-1.15zM316 404h1.15v1.15h-1.15zM317 382h1.15v1.15h-1.15zM317 409h1.15v1.15h-1.15zM318 414h1.15v1.15h-1.15zM318 383h1.15v1.15h-1.15zM319 408h1.15v1.15h-1.15zM320 408h1.15v1.15h-1.15zM321 404h1.15v1.15h-1.15zM321 406h1.15v1.15h-1.15zM322 398h1.15v1.15h-1.15zM323 381h1.15v1.15h-1.15zM324 394h1.15v1.15h-1.15zM324 395h1.15v1.15h-1.15zM325 350h1.15v1.15h-1.15zM326 398h1.15v1.15h-1.15zM327 390h1.15v1.15h-1.15zM328 378h1.15v1.15h-1.15zM329 376h1.15v1.15h-1.15zM330 411h1.15v1.15h-1.15zM331 395h1.15v1.15h-1.15zM332 376h1.15v1.15h-1.15zM333 387h1.15v1.15h-1.15zM334 393h1.15v1.15h-1.15zM335 382h1.15v1.15h-1.15zM336 395h1.15v1.15h-1.15zM337 406h1.15v1.15h-1.15zM338 384h1.15v1.15h-1.15zM339 399h1.15v1.15h-1.15zM340 386h1.15v1.15h-1.15zM341 398h1.15v1.15h-1.15zM342 402h1.15v1.15h-1.15zM343 375h1.15v1.15h-1.15zM344 381h1.15v1.15h-1.15zM345 399h1.15v1.15h-1.15zM346 397h1.15v1.15h-1.15zM347 400h1.15v1.15h-1.15zM348 381h1.15v1.15h-1.15zM349 403h1.15v1.15h-1.15zM350 374h1.15v1.15h-1.15zM352 387h1.15v1.15h-1.15zM353 395h1.15v1.15h-1.15zM354 389h1.15v1.15h-1.15zM355 398h1.15v1.15h-1.15zM356 365h1.15v1.15h-1.15zM358 409h1.15v1.15h-1.15zM359 387h1.15v1.15h-1.15zM362 388h1.15v1.15h-1.15zM363 380h1.15v1.15h-1.15zM364 371h1.15v1.15h-1.15zM365 410h1.15v1.15h-1.15zM367 371h1.15v1.15h-1.15zM368 400h1.15v1.15h-1.15zM369 402h1.15v1.15h-1.15zM372 396h1.15v1.15h-1.15zM373 408h1.15v1.15h-1.15zM376 370h1.15v1.15h-1.15zM378 382h1.15v1.15h-1.15zM379 403h1.15v1.15h-1.15zM380 384h1.15v1.15h-1.15zM381 395h1.15v1.15h-1.15zM383 393h1.15v1.15h-1.15zM390 370h1.15v1.15h-1.15zM407 374h1.15v1.15h-1.15zM411 393h1.15v1.15h-1.15zM420 383h1.15v1.15h-1.15zM421 389h1.15v1.15h-1.15zM431 390h1.15v1.15h-1.15z" fill="#f6f010"/>
<path d="M56 480h387v2h-387z" fill="#000"/>
<polyline points="58.4,204 59.3,224.7 61.3,229.4 63,217.4 65.3,212 67.3,218 69.4,209.4 69.8,227.4 70.6,262 71.3,282 72.3,262 73.1,250 73.6,270 74,300 74.6,330 74.8,400 75.8,452 77.1,455 78.7,400 79.2,330 79.2,317 80.7,316 80.7,253 81.4,221.4 82,235 82.5,225 83.4,256 84.4,212 86,228 88,210 90,213.4 91.8,213.4 94.7,228 97.4,230.7 100,228 102.5,211.4 104.7,224.7 106.7,232 109.1,231.4 111.4,213 113.4,219.4 115.4,228 118.5,229.4 121.4,232 125.4,220 127.4,228 128.5,249.4 128.8,283 129.6,300.4 130.4,283.6 130.7,249.4 131.6,234.7 133.3,228.7 136,237.4 138.3,235.4 140.7,222.7 144.7,229.4 150,236.7 152.5,258.7 154.3,222.7 156,230.7 158,237.4 163.4,234 168.7,230.4 172,230.4 183.4,242.7 183.8,257.4 184.4,286 185.4,302 186.8,290 187.3,259 189.4,250.7 190.7,253.4 191.8,265.3 193,250 194.5,240 195.4,258.7 195.8,285 196.6,299 197.5,285 198,262 198.8,249.4 202.1,239.4 204.8,254.7 206.8,254.7 208.7,246 210.4,240 212,252 215.7,246.7 219.4,256 221.6,237.4 223.4,250 224,264.7 225.4,286 226.6,308 227.4,335 227.8,364 228.4,440 229.5,472 230.7,430 230.3,364 231.2,350 231.2,296 232.7,295 232.7,270 233.6,256 236.7,258.7 239,265.4 240.7,265.4 242.5,253.4 243.4,267.4 243.7,292 244.4,307.7 245.4,292 246,267.4 247.4,275.4 248.7,278 250.3,248.7 252,260.7 254.5,270 260.7,258 262.7,264.7 265.7,267.4 269.7,256.4 272.8,264.7 276,267.4 277.4,273.4 280,267.4 281.6,268 283.3,273.4 285.3,268.7 288,267.4 290.7,272 292.3,269.4 294.7,278.7 298,272.7 299.4,284 300.3,312 302,298.7 304,280 306.4,267.4 307.4,278.7 308,272 308.7,284 310.4,269.4 312,278.7 313.1,298.7 313.3,321 314.4,310 315,289.4 316,280 316.7,288 318,281.4 319.4,277.4 320.7,285.4 321.7,285.4 322.5,298.7 323.5,322 324.3,310 324.7,293.4 325.7,275 326.7,282.7 329.4,289 331.4,287.4 337.4,293 342,293.4 346,292 348.4,284 349.4,289.4 350.5,298.7 352,294.7 354,299.4 356.2,295.7 357.3,306.8 357.7,329 358.5,341.8 359.2,329 360.3,301.6 362.2,303 364,303 364.7,324.7 365.5,344.8 366.4,323 367.4,303 369.6,303.6 371.9,317 373.3,312 374.5,341 375.7,353.7 376.6,330.6 377.5,300 378.6,312.8 379.6,321.7 381.5,312 383,313.5 384.5,323 385.5,341 386.7,324.7 389,317 392.7,318 394.5,337.3 396.1,317 398.3,318 400.9,328.4 402.4,321 405.8,328.4 408.3,328.4 412.8,320.5 414.7,324 415.3,355.2 417.2,332 422.7,328.4 426.9,341 430.6,343.3 431.4,347 433.6,335 435.1,342.5 437.3,345.5 439.6,353 441,353.7" fill="none" stroke="#12b6f6" stroke-width="1" stroke-linejoin="bevel" shape-rendering="crispEdges"/>
<g stroke="#505050" stroke-width="1" id="ticks" shape-rendering="crispEdges"><path d="M58.5 482V484"/><path d="M77.5 482V484"/><path d="M96.5 482V484"/><path d="M115.5 482V484"/><path d="M134.5 482V484"/><path d="M153.5 482V484"/><path d="M172.5 482V484"/><path d="M192.5 482V484"/><path d="M211.5 482V484"/><path d="M230.5 482V484"/><path d="M249.5 482V484"/><path d="M268.5 482V484"/><path d="M287.5 482V484"/><path d="M306.5 482V484"/><path d="M325.5 482V484"/><path d="M344.5 482V484"/><path d="M364.5 482V484"/><path d="M383.5 482V484"/><path d="M402.5 482V484"/><path d="M421.5 482V484"/><path d="M441.5 482V484"/><path d="M443 171.5H445"/><path d="M443 222.5H445"/><path d="M443 274.5H445"/><path d="M443 325.5H445"/><path d="M443 377.5H445"/><path d="M443 428.5H445"/><path d="M443 480.5H445"/></g>
<g class="ax"><text x="53" y="175" text-anchor="end">150</text><text x="53" y="226" text-anchor="end">125</text><text x="53" y="278" text-anchor="end">100</text><text x="53" y="329" text-anchor="end">75</text><text x="53" y="381" text-anchor="end">50</text><text x="53" y="432" text-anchor="end">25</text><text x="446.5" y="175">60</text><text x="446.5" y="226">50</text><text x="446.5" y="278">40</text><text x="446.5" y="329">30</text><text x="446.5" y="381">20</text><text x="446.5" y="432">10</text><text x="58.3" y="495" text-anchor="middle">0</text><text x="96.5" y="495" text-anchor="middle">100</text><text x="134.8" y="495" text-anchor="middle">200</text><text x="173.0" y="495" text-anchor="middle">300</text><text x="211.2" y="495" text-anchor="middle">400</text><text x="249.4" y="495" text-anchor="middle">500</text><text x="287.7" y="495" text-anchor="middle">600</text><text x="325.9" y="495" text-anchor="middle">700</text><text x="364.1" y="495" text-anchor="middle">800</text><text x="402.4" y="495" text-anchor="middle">900</text><text x="423" y="495">1000gB</text><text x="58" y="167" style="letter-spacing:0">MB/s</text><text x="441" y="167" text-anchor="end">ms</text></g>
</svg>
<svg width="608" height="524" viewBox="0 0 608 524" id="icons" shape-rendering="auto">
<defs>
<linearGradient id="gBlue" x1="0" y1="0" x2="0" y2="1"><stop offset="0" stop-color="#28a0ff"/><stop offset="1" stop-color="#0028d8"/></linearGradient>
<linearGradient id="gPurp" x1="0" y1="0" x2="1" y2="1"><stop offset="0" stop-color="#d060d0"/><stop offset=".45" stop-color="#b414b4"/><stop offset="1" stop-color="#8a008a"/></linearGradient>
<linearGradient id="gRed" x1="0" y1="0" x2="1" y2="1"><stop offset="0" stop-color="#ff6a6a"/><stop offset=".5" stop-color="#e81818"/><stop offset="1" stop-color="#b00000"/></linearGradient>
<linearGradient id="gCan" x1="0" y1="0" x2="1" y2="0"><stop offset="0" stop-color="#555"/><stop offset=".12" stop-color="#c8c8c8"/><stop offset=".25" stop-color="#e4e4e4"/><stop offset=".4" stop-color="#909090"/><stop offset=".62" stop-color="#383838"/><stop offset=".8" stop-color="#161616"/><stop offset=".9" stop-color="#606060"/><stop offset="1" stop-color="#111"/></linearGradient>
<radialGradient id="gGreen" cx=".35" cy=".35" r=".8"><stop offset="0" stop-color="#8cff8c"/><stop offset=".6" stop-color="#22cc22"/><stop offset="1" stop-color="#109010"/></radialGradient>
<radialGradient id="gPlat" cx=".45" cy=".45" r=".7"><stop offset="0" stop-color="#ffe9b0"/><stop offset=".55" stop-color="#f2b44e"/><stop offset="1" stop-color="#c8781e"/></radialGradient>
</defs>
<!-- bart -->
<path d="M599.500 184.500v-9l1.200-5l1.600 2l1.400-5.500l1.800 3.500l2.500-4.500v18.500z" fill="#f8d030"/>
<circle cx="605.200" cy="178.800" r="2.200" fill="#fff" stroke="#6a5a20" stroke-width=".5"/><circle cx="605.800" cy="179" r=".7" fill="#222"/>
<rect x="599" y="196.500" width="1.500" height="1.500" fill="#3a6ad0"/>
<!-- title HDD icon -->
<g>
<path d="M21.5 8.6L28.6 13.2L21 22.3L13.6 17.2Z" fill="#1d1d20" stroke="#3a3a40" stroke-width=".8"/>
<ellipse cx="22.2" cy="13.9" rx="4.3" ry="3.7" transform="rotate(-25 22.2 13.9)" fill="url(#gPlat)"/>
<circle cx="22.3" cy="13.8" r="1.3" fill="#b9bcc6"/>
<path d="M18.5 17.5l3 2l-1.2 1.6l-3-2z" fill="#6b6460"/>
</g>
<!-- caption glyphs -->
<g fill="#fff" stroke="#454b5c" stroke-width="1.1">
<rect x="498.5" y="11" width="11" height="4.5" rx="1"/>
<rect x="525.7" y="6.2" width="11" height="9" rx="1"/>
<rect x="528.8" y="9.2" width="4.8" height="3.2" fill="#fff"/>
<path d="M563.2 6.1h3.8l1.700 2.300l1.700-2.300h3.800l-3.600 4.700l3.700 4.800h-3.800l-1.800-2.400l-1.800 2.400h-3.800l3.700-4.800z" stroke-width="1.200"/>
</g>
<!-- combo arrow -->
<path d="M235.5 68h7l-3.5 4z" fill="#000"/>
<!-- thermometer -->
<g>
<path d="M271 61.5h4.5v10a4 4 0 1 1-5 0z" fill="#000" transform="translate(1 .6)"/>
<path d="M270.5 61.5h3.8v9.6a3.7 3.7 0 1 1-3.8 0z" fill="#f01010"/>
<rect x="270.5" y="61.5" width="3.8" height="3.6" fill="#40e8f0"/>
<path d="M269.2 72a3.6 3.6 0 0 0 0 4.6" stroke="#60e8f0" stroke-width="1.2" fill="none"/>
<path d="M271.5 73.2a1.6 1.6 0 0 0 1.7 2" stroke="#fff" stroke-width="1" fill="none"/>
</g>
<!-- copy text -->
<g>
<path d="M368.5 62.5h4.5l2 2v10h-6.5z" fill="#f4f4f4" stroke="#000" stroke-width="1"/>
<path d="M370 66h4M370 68.5h4M370 71h4" stroke="#1e8cff" stroke-width="1.2"/>
<path d="M375.5 75.5v1.5h9" stroke="#555" stroke-width="1" fill="none"/>
<path d="M374.5 64.5h5.5l3 3v9h-8.500z" fill="#eeeeee" stroke="#000" stroke-width="1"/>
<path d="M376.5 68.500h4M376.500 71h5M376.500 73.500h5" stroke="#1e78ff" stroke-width="1.300"/>
</g>
<!-- copy image -->
<g>
<path d="M398.5 62.500h4.500l2 2v10h-6.500z" fill="#f4f4f4" stroke="#000" stroke-width="1"/>
<rect x="400" y="66" width="4" height="6" fill="#30c030"/><rect x="400" y="65.500" width="4" height="1.300" fill="#30d0f0"/><rect x="401.300" y="67.500" width="1.700" height="2.500" fill="#e83020"/>
<path d="M404.500 64.500h5.500l3 3v9h-8.500z" fill="#eeeeee" stroke="#000" stroke-width="1"/>
<rect x="406" y="68.500" width="5" height="6" fill="#30c030"/><rect x="406" y="68" width="5" height="1.400" fill="#30d0f0"/><rect x="408" y="70" width="2" height="2.600" fill="#e83020"/><rect x="407" y="72.500" width="1.500" height="1.500" fill="#f0e020"/>
</g>
<!-- camera -->
<g>
<path d="M428.500 66.500q0-1 1-1h3l.8-2.200h5l.8 2.200h3q1 0 1 1v7.500q0 1-1 1h-12.600q-1 0-1-1z" fill="#1c1c1c"/>
<path d="M433.300 64.300h4.200v1.500h-4.200z" fill="#e8e8e8"/>
<circle cx="435.500" cy="70.300" r="2.900" fill="#f2f2f2" stroke="#555" stroke-width=".6"/>
<rect x="439.300" y="68" width="1.900" height="1.900" fill="#20e040"/>
</g>
<!-- gears -->
<g fill="#e2e200" stroke="#fff" stroke-width="2.4" stroke-linejoin="round"><path d="M466.9 66.7L468.3 67.2L468.0 68.0L466.5 68.0L466.0 68.6L466.6 69.6L465.7 70.1L464.6 69.4L463.8 69.5L463.4 70.6L462.2 70.5L462.0 69.5L461.2 69.2L460.0 69.8L459.1 69.2L459.9 68.3L459.5 67.7L458.0 67.6L457.9 66.7L459.3 66.3L459.5 65.7L458.5 64.9L459.1 64.2L460.5 64.6L461.2 64.2L461.1 63.1L462.2 62.9L462.9 63.8L463.8 63.9L464.6 63.0L465.7 63.3L465.4 64.4L466.0 64.8L467.5 64.6L468.0 65.4L466.9 66.1Z"/><path d="M472.3 73.2L473.5 74.0L472.8 74.9L471.2 74.5L470.5 74.9L470.7 76.2L469.4 76.5L468.5 75.4L467.6 75.4L466.6 76.5L465.4 76.1L465.6 74.9L464.9 74.4L463.3 74.8L462.7 73.9L463.9 73.1L463.7 72.4L462.2 71.9L462.5 70.9L464.1 70.9L464.6 70.2L463.9 69.1L464.9 68.5L466.2 69.3L467.1 69.0L467.5 67.8L468.8 67.8L469.2 69.0L470.1 69.3L471.4 68.6L472.4 69.2L471.6 70.3L472.1 70.9L473.8 71.0L474.0 72.0L472.5 72.4Z"/></g>
<g fill="#e2e200" stroke="#6a6a00" stroke-width=".9" stroke-linejoin="round">
<path d="M466.9 66.7L468.3 67.2L468.0 68.0L466.5 68.0L466.0 68.6L466.6 69.6L465.7 70.1L464.6 69.4L463.8 69.5L463.4 70.6L462.2 70.5L462.0 69.5L461.2 69.2L460.0 69.8L459.1 69.2L459.9 68.3L459.5 67.7L458.0 67.6L457.9 66.7L459.3 66.3L459.5 65.7L458.5 64.9L459.1 64.2L460.5 64.6L461.2 64.2L461.1 63.1L462.2 62.9L462.9 63.8L463.8 63.9L464.6 63.0L465.7 63.3L465.4 64.4L466.0 64.8L467.5 64.6L468.0 65.4L466.9 66.1Z"/>
<path d="M472.3 73.2L473.5 74.0L472.8 74.9L471.2 74.5L470.5 74.9L470.7 76.2L469.4 76.5L468.5 75.4L467.6 75.4L466.6 76.5L465.4 76.1L465.6 74.9L464.9 74.4L463.3 74.8L462.7 73.9L463.9 73.1L463.7 72.4L462.2 71.9L462.5 70.9L464.1 70.9L464.6 70.2L463.9 69.1L464.9 68.5L466.2 69.3L467.1 69.0L467.5 67.8L468.8 67.8L469.2 69.0L470.1 69.3L471.4 68.6L472.4 69.2L471.6 70.3L472.1 70.9L473.8 71.0L474.0 72.0L472.5 72.4Z"/>
</g>
<path d="M462.700 63.300l.95-1.600l.95 1.600v4.200h-1.900z" fill="#9a9cc0" stroke="#55557a" stroke-width=".5"/><path d="M467.200 69.200l.95-1.400l.95 1.400v3.600h-1.900z" fill="#9a9cc0" stroke="#55557a" stroke-width=".5"/>
<!-- purple arrow -->
<rect x="491" y="60" width="19.200" height="19" rx="2" fill="url(#gPurp)"/>
<path d="M499.200 62.200h2v9.200h4.800l-5.800 5.800l-5.800-5.800h4.800z" fill="#fff"/>

<!-- File Benchmark icon -->
<path d="M41.700 101.700h10l3 3v11.500h-13z" fill="#f2f2f2" stroke="#000" stroke-width="1.200"/>
<path d="M51.700 101.700v3h3" fill="none" stroke="#000" stroke-width=".8"/>
<path d="M48 103.200c2 0 2.900 1.600 2.700 3.600l-.8 4.400c-.2 1-3.600 1-3.800 0l-.8-4.400c-.2-2 .7-3.600 2.700-3.600z" fill="#e818e8" stroke="#000" stroke-width=".9"/>
<ellipse cx="48" cy="114.200" rx="2" ry="1.200" fill="#e818e8" stroke="#000" stroke-width=".8"/>
<!-- Benchmark icon -->
<path d="M47.600 119.800c2.700 0 3.800 1.900 3.500 4.200l-.9 5.200c-.3 1.200-4.900 1.200-5.200 0l-.9-5.200c-.3-2.300.8-4.200 3.500-4.200z" fill="#ecec10" stroke="#000" stroke-width="1"/>
<ellipse cx="47.800" cy="133.300" rx="2.600" ry="1.700" fill="#e0e010" stroke="#000" stroke-width="1"/>
<path d="M46.300 121.500v6" stroke="#ffffa0" stroke-width="1"/>
<!-- Disk monitor icon -->
<rect x="169.600" y="101.700" width="15.400" height="14.800" fill="#ffffc4" stroke="#000" stroke-width="1.200"/>
<path d="M170.300 108h2v-0h0v8h-2zM174.300 112h1.800v4h-1.800zM177.800 108h2.300v8h-2.300zM182 111h2.300v5h-2.300z" fill="#20e020"/>
<path d="M172.300 111h2v5h-2zM176 107h1.800v9h-1.800zM180.100 110h1.900v6h-1.900z" fill="#3a3af0"/>
<!-- Info icon -->
<rect x="151.800" y="121.800" width="4.800" height="3.600" rx="1" fill="#28a8ff" stroke="#000" stroke-width="1"/>
<path d="M150.200 127.300h6v7.200h1.800v2.300h-8v-2.300h2.200v-4.900h-2z" fill="url(#gBlue)" stroke="#000" stroke-width="1"/>
<!-- Health icon -->
<path d="M221.300 121.700h5.800v4.900h5v5.600h-5v4.700h-5.800v-4.700h-5v-5.600h5z" fill="url(#gRed)" stroke="#000" stroke-width="1.100"/>
<!-- AAM speaker -->
<path d="M282.300 105.600h3.400l5.600-4.700v15.600l-5.600-4.700h-3.400z" fill="#f4e81c" stroke="#000" stroke-width="1.200" stroke-linejoin="round"/>
<path d="M289.700 102.500v12.400" stroke="#6a6400" stroke-width="1.100"/>
<path d="M285.700 106v5.500" stroke="#8a8400" stroke-width=".8"/>
<path d="M293.400 105.200q2.200 3.400 0 6.800M295.600 103.200q3.600 5.400 0 10.800" fill="none" stroke="#111" stroke-width="1.100"/>
<!-- Error scan magnifier -->
<path d="M308.200 129.800l6 6" stroke="#000" stroke-width="4.200" stroke-linecap="round"/>
<path d="M308.600 130.200l5.300 5.300" stroke="#1a2ae0" stroke-width="2.200" stroke-linecap="round"/>
<circle cx="304.600" cy="126.100" r="4.500" fill="url(#gGreen)" stroke="#000" stroke-width="1.100"/>
<path d="M302.200 124.500l1.500-1.500M304.600 127.600l2-2" stroke="#d8ffd8" stroke-width=".8"/>
<!-- Random access icon -->
<rect x="359.600" y="101.700" width="15" height="14.600" fill="#ffffc4" stroke="#000" stroke-width="1.200"/>
<g fill="#f01818"><rect x="361" y="114" width="1.300" height="1.300"/><rect x="362.500" y="111" width="1.300" height="1.300"/><rect x="365" y="112.500" width="1.300" height="1.300"/><rect x="367" y="109.500" width="1.300" height="1.300"/><rect x="369.500" y="111" width="1.300" height="1.300"/><rect x="371.500" y="108.500" width="1.300" height="1.300"/><rect x="371.500" y="113" width="1.300" height="1.300"/></g>
<g fill="#2030f0"><rect x="361.500" y="108" width="1.300" height="1.300"/><rect x="363.500" y="109.500" width="1.300" height="1.300"/><rect x="365.500" y="107" width="1.300" height="1.300"/><rect x="368" y="105.500" width="1.300" height="1.300"/><rect x="370" y="104.500" width="1.300" height="1.300"/><rect x="370" y="107" width="1.300" height="1.300"/></g>
<!-- Folder icon -->
<path d="M401.800 123.600l1.600-2h4.200l1.600 2h6.400v13.200h-13.800z" fill="#b89a00" stroke="#000" stroke-width="1.200" stroke-linejoin="round"/>
<path d="M402.600 125.200h10v10.800h-10z" fill="#f6e030"/>
<path d="M402.600 125.200h10v1.200h-10z" fill="#fff48a"/>
<path d="M412.600 125.200h2.200v10.800h-2.200z" fill="#a08400"/>
<path d="M403 122.600h5v1h-5z" fill="#e8d020"/>
<!-- Extra tests icon -->
<rect x="491.600" y="101.700" width="14.800" height="14.600" fill="#ffffc4" stroke="#000" stroke-width="1.200"/>
<path d="M492.300 108h2.200v7.700h-2.200z" fill="#20e020"/><path d="M494.500 110.500h2v5.200h-2z" fill="#3a3af0"/>
<rect x="497.700" y="107.600" width="8.500" height="8.500" fill="#fff" stroke="#000" stroke-width="1"/>
<rect x="498.200" y="108.100" width="7.500" height="2" fill="#2040e0"/>
<g fill="#f01818"><rect x="499.300" y="111" width="1.200" height="1.200"/><rect x="501.600" y="111" width="1.200" height="1.200"/><rect x="503.800" y="113" width="1.200" height="1.200"/><rect x="499.300" y="114.500" width="1.200" height="1.200"/></g>
<g fill="#2030f0"><rect x="503.800" y="111" width="1.200" height="1.200"/><rect x="499.300" y="113" width="1.200" height="1.200"/><rect x="501.600" y="113" width="1.200" height="1.200"/><rect x="501.600" y="114.500" width="1.200" height="1.200"/></g>
<!-- Trash icon -->
<path d="M516.200 124.300h12.200l-.6 12.300h-11z" fill="#000"/>
<path d="M517.400 124.800h9.800l-.5 10.600h-8.800z" fill="url(#gCan)"/>
<path d="M514.900 122h14.200v2.700h-14.200z" fill="#000"/>
<path d="M516.500 122.900h10.500v.9h-10.500z" fill="#8a8a8a"/>
<path d="M520.100 120.900h3.800v1.300h-3.800z" fill="#000"/>

<!-- radio dot -->
<circle cx="486" cy="196" r="3.200" fill="#1a5cc0"/><circle cx="485.300" cy="195.200" r="1.200" fill="#8cccff"/>
<!-- checkmarks -->
<g fill="none" stroke="#31479f" stroke-width="1.900">
<path d="M483.200 285.500l2.300 3.200l4-7"/>
<path d="M483.200 410.500l2.300 3.200l4-7"/>
<path d="M483.200 444.500l2.300 3.200l4-7"/>
</g>
<!-- spinner -->
<rect x="525.500" y="251.500" width="15" height="8.500" fill="#f0f0f0" stroke="#b8b8b8" stroke-width="1"/>
<rect x="525.500" y="260" width="15" height="8.500" fill="#f0f0f0" stroke="#b8b8b8" stroke-width="1"/>
<path d="M530.500 258l2.500-3l2.500 3z" fill="#a8a8a8"/><path d="M530.500 263l2.500 3l2.500-3z" fill="#a8a8a8"/>
</svg>

</body></html>
